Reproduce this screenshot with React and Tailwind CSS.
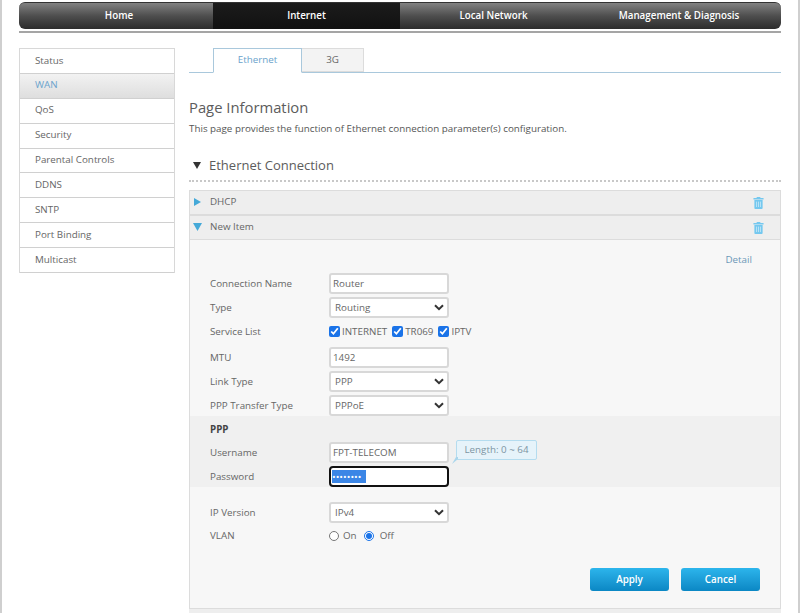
const navItems = ['Home', 'Internet', 'Local Network', 'Management & Diagnosis'];
const sideItems = ['Status', 'WAN', 'QoS', 'Security', 'Parental Controls', 'DDNS', 'SNTP', 'Port Binding', 'Multicast'];

function Trash() {
  return (
    <svg width="11" height="13" viewBox="0 0 12 14" className="text-[#74c8ef] block">
      <path d="M4 2V1h4v1h3.5v1.6H.5V2z" fill="currentColor" />
      <path d="M1.5 4.4h9V13a1 1 0 0 1-1 1h-7a1 1 0 0 1-1-1z" fill="currentColor" />
      <path d="M3.9 6v6M6 6v6M8.1 6v6" stroke="#bfe6f7" strokeWidth="1" />
    </svg>
  );
}

function Row({ label, className = '', children }) {
  return (
    <div className={`flex items-center ${className}`}>
      <span className="w-[139px] shrink-0 pl-[20px] text-[#666]">{label}</span>
      {children}
    </div>
  );
}

function TextBox({ value }) {
  return (
    <input
      readOnly
      value={value}
      className="w-[120px] h-[21px] px-[2px] bg-white border-2 border-[#d8d8d8] rounded-[3px] text-[#666] outline-none"
    />
  );
}

function Select({ value }) {
  return (
    <div className="w-[120px] h-[21px] pl-[4px] pr-[3px] bg-white border-2 border-[#d8d8d8] rounded-[3px] text-[#666] flex items-center justify-between">
      <span>{value}</span>
      <svg width="10" height="7" viewBox="0 0 10 7" fill="none" stroke="#333" strokeWidth="2">
        <path d="M1 1.2l4 4 4-4" />
      </svg>
    </div>
  );
}

function Check({ label }) {
  return (
    <label className="flex items-center gap-[2px] mr-[5px]">
      <input type="checkbox" readOnly checked className="w-[11px] h-[11px] m-0 accent-[#1a73e8]" />
      <span className="text-[#666]">{label}</span>
    </label>
  );
}

function PanelHead({ open, label }) {
  return (
    <div className="h-[25px] flex items-center bg-[#eeeeee] border border-[#dcdcdc] pl-[3px] pr-[16px]">
      <span className="w-[17px]">
        {open ? (
          <svg width="9" height="8" viewBox="0 0 9 8" className="block">
            <path d="M0 0h9L4.5 8z" fill="#45a9d8" />
          </svg>
        ) : (
          <svg width="8" height="8" viewBox="0 0 8 8" className="block ml-[1px]">
            <path d="M0 0l7 4-7 4z" fill="#45a9d8" />
          </svg>
        )}
      </span>
      <span className="text-[#666]">{label}</span>
      <span className="ml-auto">
        <Trash />
      </span>
    </div>
  );
}

export default function App() {
  return (
    <div className="h-[613px] overflow-hidden bg-white border-l-2 border-r-2 border-[#cfcfcf] font-['Open_Sans',sans-serif] text-[9.8px] leading-none">
      <div className="pl-[17px] pr-[17px] pt-[2px]">
        <div className="pb-[2px] border-b-2 border-[#a5a5a5]">
          <div className="flex h-[27px] rounded-[6px] overflow-hidden border-t border-[#333] bg-gradient-to-b from-[#828282] via-[#4e4e4e] to-[#2c2c2c]">
            {navItems.map((item, i) => (
              <div
                key={item}
                className={`flex items-center justify-center pb-[1px] text-white font-semibold ${
                  i === 0 ? 'w-[194px] pl-[6px]' : i === 3 ? 'w-[194px] pr-[10px]' : 'w-[187px]'
                } ${i === 1 ? 'bg-gradient-to-b from-[#1c1c1c] to-[#111]' : ''}`}
              >
                {item}
              </div>
            ))}
          </div>
        </div>

        <div className="flex mt-[15px]">
          <div className="w-[156px] shrink-0 self-start border border-[#d8d8d8] border-b-0">
            {sideItems.map((item) => (
              <div
                key={item}
                className={`h-[24.875px] flex items-center pl-[15px] pb-[1px] border-b border-[#d0d0d0] ${
                  item === 'WAN' ? 'bg-gradient-to-b from-[#f2f2f2] to-[#dedede] text-[#6aa3cc]' : 'text-[#666]'
                }`}
              >
                {item}
              </div>
            ))}
          </div>

          <div className="ml-[14px] flex-1">
            <div className="flex h-[25px] border-b border-[#a9c8dc] pl-[24px]">
              <div className="w-[89px] h-[25px] pb-[1px] flex items-center justify-center bg-white border border-[#a9c8dc] border-b-white text-[#6aa3cc]">
                Ethernet
              </div>
              <div className="w-[62px] h-[24px] flex items-center justify-center bg-[#f3f3f3] border border-l-0 border-[#dcdcdc] text-[#666]">
                3G
              </div>
            </div>

            <h1 className="mt-[27px] text-[14.8px] font-normal text-[#5c5c5c]">Page Information</h1>
            <p className="mt-[9px] text-[#555]">This page provides the function of Ethernet connection parameter(s) configuration.</p>

            <div className="mt-[25px] pb-[8px] border-b-2 border-dotted border-[#c8c8c8] flex items-center">
              <span className="w-[20px] pl-[4px]">
                <svg width="8" height="7" viewBox="0 0 8 7" className="block">
                  <path d="M0 0h8L4 7z" fill="#333" />
                </svg>
              </span>
              <span className="text-[13px] text-[#5c5c5c]">Ethernet Connection</span>
            </div>

            <div className="mt-[8px] flex flex-col">
              <PanelHead label="DHCP" />
              <PanelHead open label="New Item" />
            </div>

            <div className="bg-[#f7f7f7] border-x border-b border-[#dcdcdc] h-[369px] relative">
              <div className="flex justify-end pr-[28px] pt-[15px] text-[#6c98b8]">Detail</div>

              <div className="mt-[9px] flex flex-col">
                <Row label="Connection Name" className="h-[21px]">
                  <TextBox value="Router" />
                </Row>
                <Row label="Type" className="mt-[3px] h-[21px]">
                  <Select value="Routing" />
                </Row>
                <Row label="Service List" className="mt-[4px] h-[19px]">
                  <div className="flex items-center">
                    <Check label="INTERNET" />
                    <Check label="TR069" />
                    <Check label="IPTV" />
                  </div>
                </Row>
                <Row label="MTU" className="mt-[6px] h-[21px]">
                  <TextBox value="1492" />
                </Row>
                <Row label="Link Type" className="mt-[3px] h-[21px]">
                  <Select value="PPP" />
                </Row>
                <Row label="PPP Transfer Type" className="mt-[3px] h-[21px]">
                  <Select value="PPPoE" />
                </Row>

                <div className="bg-[#f0f0f0] h-[71px] relative">
                  <div className="pl-[20px] pt-[9px] font-bold text-[#444]">PPP</div>
                  <Row label="Username" className="mt-[7px] h-[21px]">
                    <TextBox value="FPT-TELECOM" />
                  </Row>
                  <Row label="Password" className="mt-[3px] h-[21px]">
                    <div className="w-[120px] h-[21px] px-[1px] bg-white border-2 border-[#111] rounded-[4px] flex items-center">
                      <span className="bg-[#3b86e6] text-white h-[13px] w-[34px] flex items-center overflow-hidden">
                        ••••••••
                      </span>
                    </div>
                  </Row>
                  <div className="absolute left-[266px] top-[24px] w-[81px] h-[20px] flex items-center justify-center bg-[#e6f3fa] border border-[#b4dcef] rounded-[2px] text-[#7d95a3]">
                    Length: 0 ~ 64
                    <svg width="6" height="7" viewBox="0 0 6 7" className="absolute left-[-5px] bottom-[-5px]">
                      <path d="M0 7L4 0h2v2z" fill="#a9d6ec" />
                    </svg>
                  </div>
                </div>

                <Row label="IP Version" className="mt-[15px] h-[21px]">
                  <Select value="IPv4" />
                </Row>
                <Row label="VLAN" className="mt-[2px] h-[21px]">
                  <div className="flex items-center text-[#666]">
                    <input type="radio" readOnly checked={false} className="w-[10px] h-[10px] m-0 accent-[#1a73e8]" />
                    <span className="ml-[4px]">On</span>
                    <input type="radio" readOnly checked className="w-[10px] h-[10px] ml-[7px] m-0 accent-[#1a73e8]" />
                    <span className="ml-[6px]">Off</span>
                  </div>
                </Row>

                <div className="flex justify-end gap-[12px] pr-[20px] mt-[22px]">
                  <button className="w-[79px] h-[23px] rounded-[3px] bg-gradient-to-b from-[#2cb5ec] to-[#0a87c4] text-white font-semibold">
                    Apply
                  </button>
                  <button className="w-[79px] h-[23px] rounded-[3px] bg-gradient-to-b from-[#2cb5ec] to-[#0a87c4] text-white font-semibold">
                    Cancel
                  </button>
                </div>
              </div>
            </div>
            <div className="h-[10px] bg-[#eeeeee]" />
          </div>
        </div>
      </div>
    </div>
  );
}
